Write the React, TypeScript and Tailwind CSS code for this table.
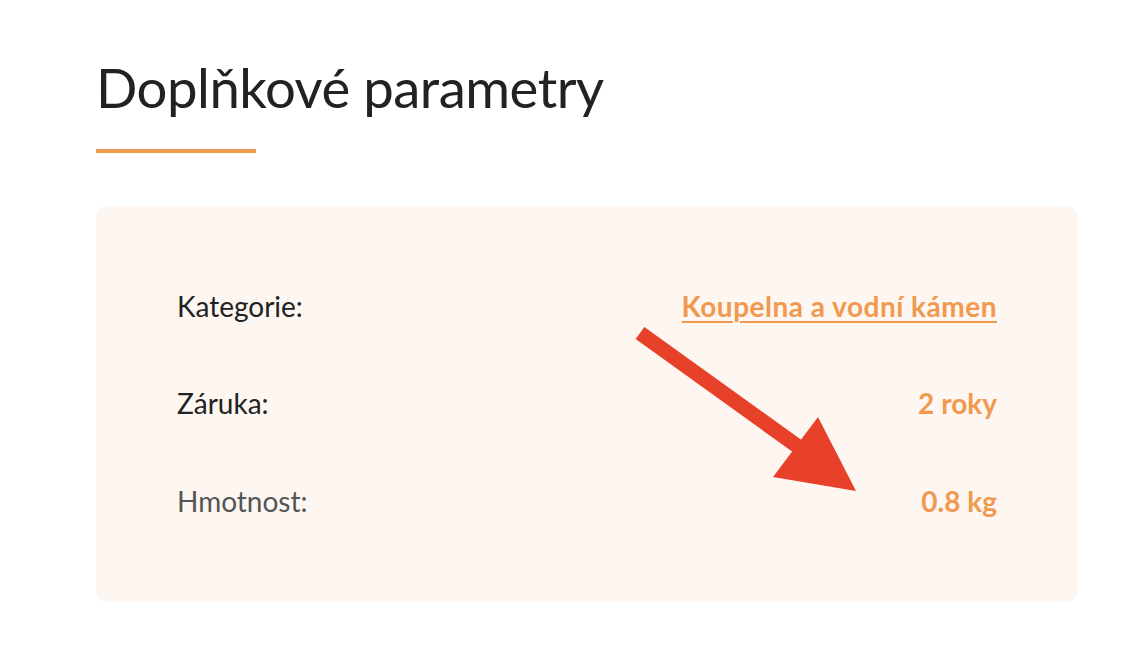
export default function App() {
  return (
    <div className="relative w-[1144px] h-[658px] bg-white" style={{ fontFamily: "Lato, 'Noto Sans', sans-serif" }}>
      <div className="pl-[96px] pr-[66px] pt-[53px]">
        <h1 className="text-[54.5px] leading-[68px] text-[#222222] font-normal tracking-[-0.5px]">Doplňkové parametry</h1>
        <div className="mt-[28px] h-[4px] w-[160px] bg-[#f0994f]" />
        <div className="mt-[53px] rounded-[12px] bg-[#fdf6f1] px-[81px] pt-[51px] pb-[53px]">
          <div className="flex h-[97px] items-center justify-between text-[28px]">
            <span className="text-[#222222]">Kategorie:</span>
            <a className="font-bold text-[#f0994f] underline underline-offset-4 decoration-2 tracking-[0.5px]">Koupelna a vodní kámen</a>
          </div>
          <div className="flex h-[98px] items-center justify-between text-[28px]">
            <span className="text-[#222222]">Záruka:</span>
            <span className="font-bold text-[#f0994f]">2 roky</span>
          </div>
          <div className="flex h-[97px] items-center justify-between text-[28px]">
            <span className="text-[#555555]">Hmotnost:</span>
            <span className="font-bold text-[#f0994f]">0.8 kg</span>
          </div>
        </div>
      </div>
      <svg className="absolute left-0 top-0" width="1144" height="658" viewBox="0 0 1144 658">
        <line x1="640" y1="333" x2="800" y2="448" stroke="#e8412a" strokeWidth="15" />
        <polygon points="773,477 818,417 856,491" fill="#e8412a" />
      </svg>
    </div>
  );
}
